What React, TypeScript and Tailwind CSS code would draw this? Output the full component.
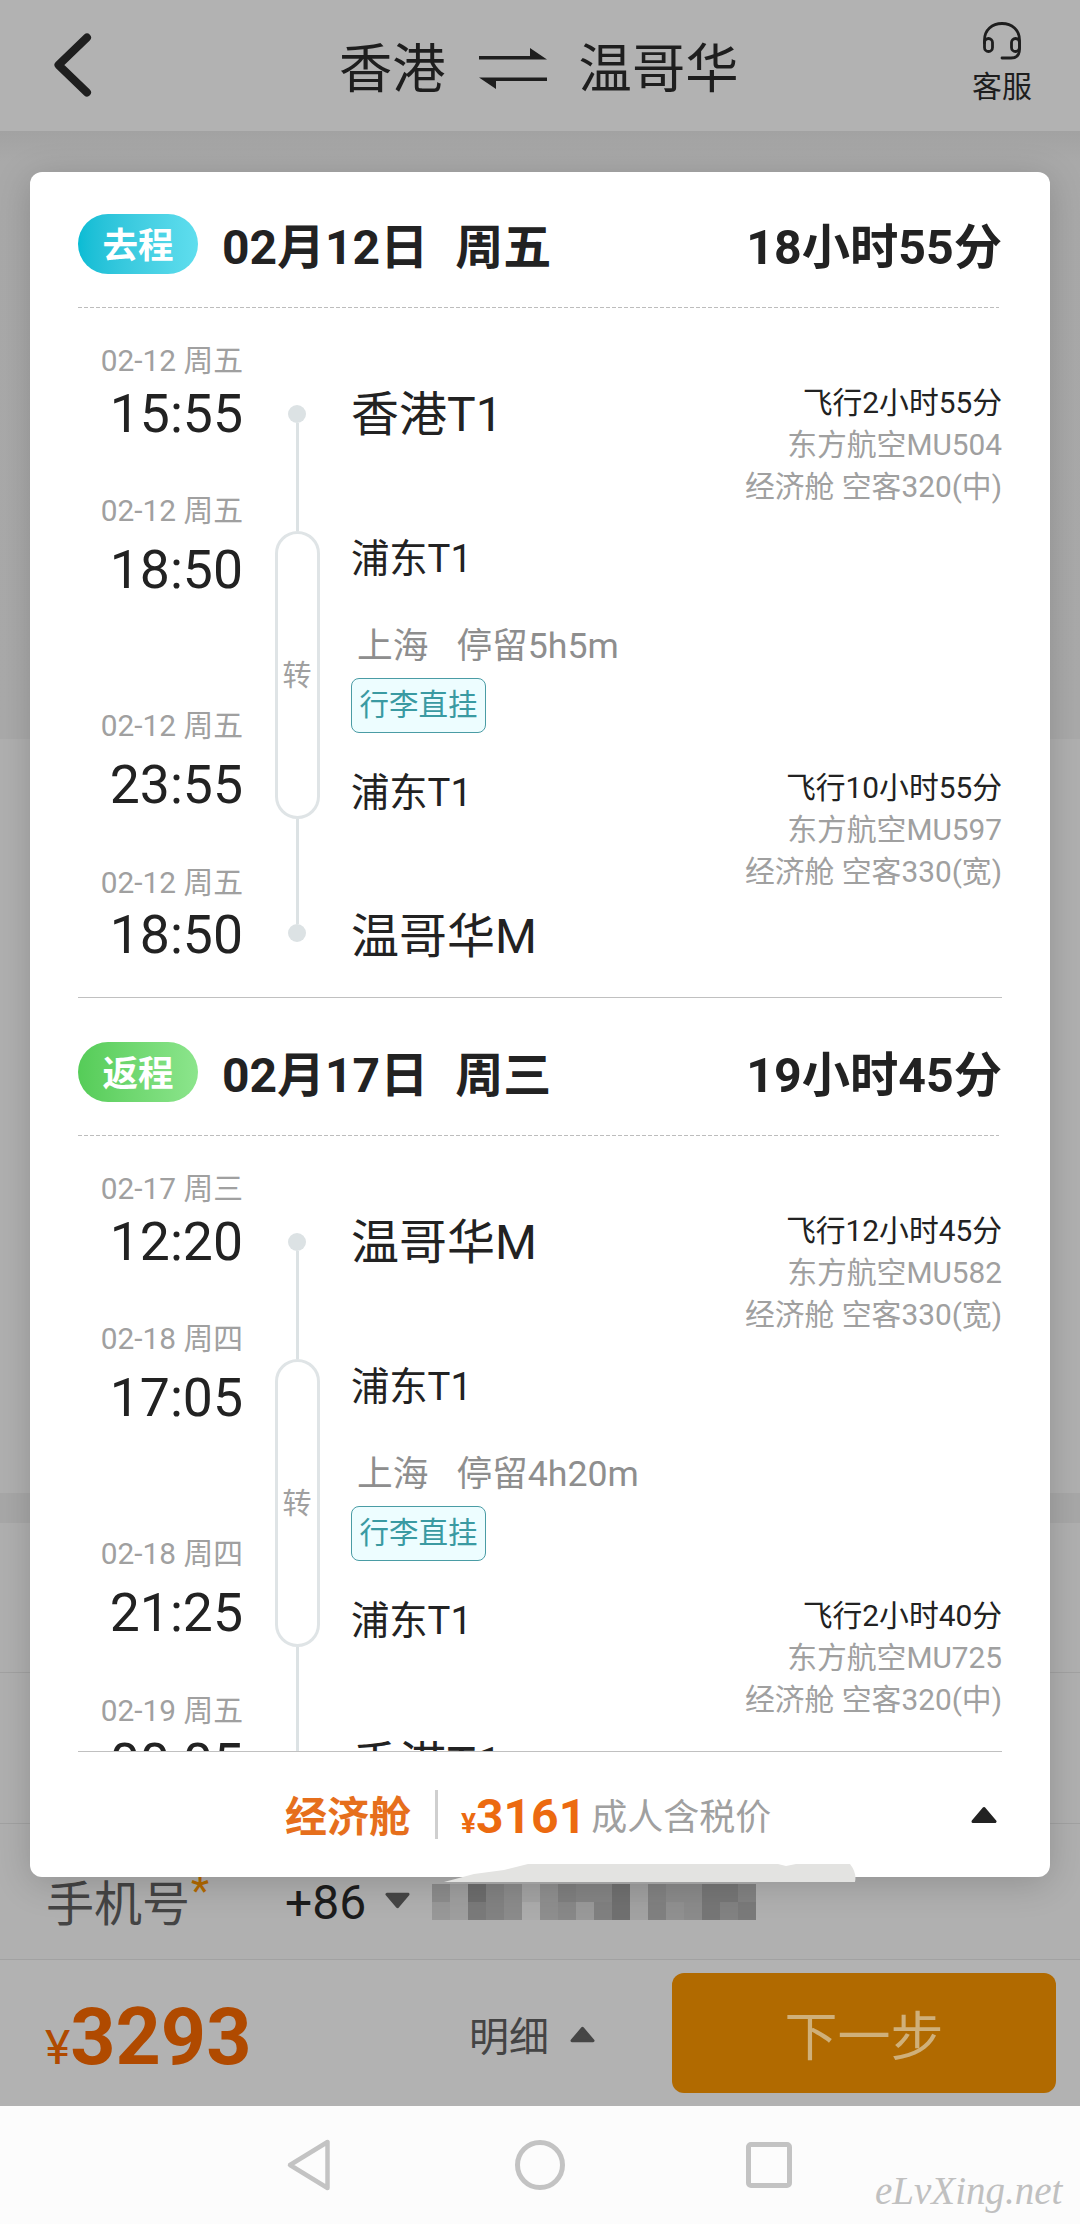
import type { ReactNode } from "react";

type Stop = { date: string; time: string };

type Flight = { duration: string; carrier: string; cabin: string };

type Journey = {
  label: string;
  badgeClass: string;
  date: string;
  weekday: string;
  total: string;
  from: string;
  to: string;
  via: string;
  city: string;
  layover: string;
  stops: Stop[];
  flights: Flight[];
};

const journeys: Journey[] = [
  {
    label: "去程",
    badgeClass: "from-[#08bcd4] to-[#5fdeee]",
    date: "02月12日",
    weekday: "周五",
    total: "18小时55分",
    from: "香港T1",
    to: "温哥华M",
    via: "浦东T1",
    city: "上海",
    layover: "停留5h5m",
    stops: [
      { date: "02-12 周五", time: "15:55" },
      { date: "02-12 周五", time: "18:50" },
      { date: "02-12 周五", time: "23:55" },
      { date: "02-12 周五", time: "18:50" },
    ],
    flights: [
      { duration: "飞行2小时55分", carrier: "东方航空MU504", cabin: "经济舱 空客320(中)" },
      { duration: "飞行10小时55分", carrier: "东方航空MU597", cabin: "经济舱 空客330(宽)" },
    ],
  },
  {
    label: "返程",
    badgeClass: "from-[#55cc58] to-[#8ce58c]",
    date: "02月17日",
    weekday: "周三",
    total: "19小时45分",
    from: "温哥华M",
    to: "香港T1",
    via: "浦东T1",
    city: "上海",
    layover: "停留4h20m",
    stops: [
      { date: "02-17 周三", time: "12:20" },
      { date: "02-18 周四", time: "17:05" },
      { date: "02-18 周四", time: "21:25" },
      { date: "02-19 周五", time: "00:05" },
    ],
    flights: [
      { duration: "飞行12小时45分", carrier: "东方航空MU582", cabin: "经济舱 空客330(宽)" },
      { duration: "飞行2小时40分", carrier: "东方航空MU725", cabin: "经济舱 空客320(中)" },
    ],
  },
];

// Censored phone number, two rows of 18px blocks
const mosaic = [
  "#8c8c8c", "#9f9f9f", "#6d6d6d", "#828282", "#8b8b8b", "#a3a3a3", "#8f8f8f", "#7f7f7f", "#848484", "#848484", "#707070", "#a0a0a0", "#828282", "#8a8a8a", "#8a8a8a", "#767676", "#767676", "#828282",
  "#989898", "#9e9e9e", "#7a7a7a", "#828282", "#8b8b8b", "#acacac", "#8e8e8e", "#888888", "#999999", "#808080", "#707070", "#a2a2a2", "#808080", "#909090", "#8b8b8b", "#767676", "#828282", "#7a7a7a",
];

const Triangle = ({ className }: { className: string }) => (
  <svg viewBox="0 0 26 17" className={className}>
    <path d="M13 2 L24 15 H2 Z" fill="currentColor" stroke="currentColor" strokeWidth="3" strokeLinejoin="round" />
  </svg>
);

const StopTime = ({ stop, className }: { stop: Stop; className: string }) => (
  <div className={`flex flex-col items-end ${className}`}>
    <span className="text-[29.8px] leading-[32px] text-[#a0a0a0]">{stop.date}</span>
    <span className="text-[53.5px] leading-[56px] text-[#222]">{stop.time}</span>
  </div>
);

const FlightInfo = ({ flight, className }: { flight: Flight; className: string }) => (
  <div className={`text-right text-[29.8px] leading-[42px] text-[#a0a0a0] ${className}`}>
    <p className="text-[#222]">{flight.duration}</p>
    <p>{flight.carrier}</p>
    <p>{flight.cabin}</p>
  </div>
);

const Timeline = () => (
  <div className="flex w-[46px] flex-col items-center pt-[97px]">
    <span className="size-[18px] shrink-0 rounded-full bg-[#dce2e4]" />
    <span className="h-[108px] w-[3px] shrink-0 bg-[#dce2e4]" />
    <div className="flex h-[288px] w-[45px] shrink-0 items-center justify-center rounded-full border-[3px] border-[#dfe4e6] pt-[3px] text-[29px] text-[#a0a0a0]">
      转
    </div>
    <span className="h-[105px] w-[3px] shrink-0 bg-[#dce2e4]" />
    <span className="size-[18px] shrink-0 rounded-full bg-[#dce2e4]" />
  </div>
);

const JourneySection = ({ journey }: { journey: Journey }) => (
  <section className="mb-[2px] h-[826px] shrink-0 border-b border-[#c0c0c0]">
    <div className="flex h-[135px] items-center pt-[17px]">
      <span className={`-mt-[9px] flex h-[60px] w-[120px] items-center justify-center rounded-full bg-linear-to-r pt-[7px] text-[35.5px] font-bold text-white ${journey.badgeClass}`}>
        {journey.label}
      </span>
      <h2 className="ml-[24px] text-[48px] font-bold text-[#222]">
        {journey.date}
        <span className="ml-[27px]">{journey.weekday}</span>
      </h2>
      <span className="ml-auto text-[48.3px] font-bold text-[#222]">{journey.total}</span>
    </div>

    <div className="h-px w-[921px] bg-[repeating-linear-gradient(90deg,#bdbdbd_0_4px,transparent_4px_6px)]" />

    <div className="flex">
      <div className="flex w-[165px] flex-col">
        <StopTime stop={journey.stops[0]} className="mt-[37px] gap-[9px]" />
        <StopTime stop={journey.stops[1]} className="mt-[53px] gap-[15px]" />
        <StopTime stop={journey.stops[2]} className="mt-[112px] gap-[15px]" />
        <StopTime stop={journey.stops[3]} className="mt-[54px] gap-[8px]" />
      </div>

      <div className="ml-[31px]">
        <Timeline />
      </div>

      <div className="ml-[31px] flex flex-col text-[#222]">
        <p className="mt-[79px] text-[48px] leading-[56px]">{journey.from}</p>
        <p className="mt-[92px] text-[38.3px] leading-[48px]">{journey.via}</p>
        <p className="mt-[41px] pl-[6px] text-[35.7px] leading-[44px] text-[#8e8e8e]">
          {journey.city}
          <span className="ml-[28px]">{journey.layover}</span>
        </p>
        <span className="mt-[10px] flex h-[55px] w-[135px] items-center justify-center rounded-lg border border-[#4a9ca5] bg-[#edfdff] text-[29.5px] whitespace-nowrap text-[#3a9aa2]">
          行李直挂
        </span>
        <p className="mt-[36px] text-[38.3px] leading-[48px]">{journey.via}</p>
        <p className="mt-[92px] text-[48px] leading-[56px]">{journey.to}</p>
      </div>

      <div className="ml-auto flex flex-col">
        <FlightInfo flight={journey.flights[0]} className="mt-[74px]" />
        <FlightInfo flight={journey.flights[1]} className="mt-[259px]" />
      </div>
    </div>
  </section>
);

const Header = () => (
  <header className="flex h-[131px] shrink-0 items-center bg-[#b2b2b2] text-[#1e1e1e]">
    <svg viewBox="0 0 44 70" className="-mt-[2px] ml-[50px] h-[70px] w-[44px]" fill="none" stroke="currentColor" strokeWidth="8" strokeLinecap="round" strokeLinejoin="round">
      <path d="M37 7.500 L8.500 35 L37 62.500" />
    </svg>
    <div className="ml-[245px] flex items-center pt-[10px] text-[53.3px]">
      <span>香港</span>
      <svg viewBox="0 0 68 41" className="-mt-[4px] ml-[33px] h-[41px] w-[68px]" fill="currentColor">
        <path d="M0 8 H51 V0 L68 11.500 H0 Z M68 29.500 H0 L17 41 V33 H68 Z" />
      </svg>
      <span className="ml-[32px]">温哥华</span>
    </div>
    <div className="mr-[48px] ml-auto flex flex-col items-center gap-[7px] text-[30px] leading-[40px]">
      <svg viewBox="0 0 38 38" className="-mt-[2px] h-[38px] w-[38px]" fill="none" stroke="currentColor" strokeWidth="2.800" strokeLinecap="round">
        <path d="M1.500 21 V18 C1.500 8 9 1.500 19 1.500 S36.500 8 36.500 18 V27 C36.500 33.500 33 36 28 36 H19" />
        <rect x="1.500" y="16.500" width="8" height="13" rx="4" />
        <rect x="28.500" y="16.500" width="8" height="13" rx="4" />
      </svg>
      <span>客服</span>
    </div>
  </header>
);

const PageRow = ({ children, className }: { children?: ReactNode; className: string }) => (
  <div className={`shrink-0 ${className}`}>{children}</div>
);

export default function App() {
  return (
    <div
      lang="zh-CN"
      className="relative flex h-[2224px] w-[1080px] flex-col overflow-hidden bg-[#b0b0b0] font-[Roboto,'Noto_Sans_CJK_SC',sans-serif]"
    >
      <Header />

      {/* Dimmed page behind the dialog */}
      <PageRow className="h-[608px] bg-linear-to-b from-[#a2a2a2] via-[#a9a9a9] via-5% to-[#aaaaaa]" />
      <PageRow className="h-[754px]" />
      <PageRow className="h-[30px] bg-[#a8a8a8]" />
      <PageRow className="h-[150px] border-b border-[#a2a2a2]" />
      <PageRow className="h-[151px] border-b border-[#a2a2a2]" />
      <PageRow className="flex h-[136px] items-center border-b border-[#a2a2a2] pt-[18px]">
        <span className="ml-[46px] pt-[8px] text-[48px] text-[#444]">手机号</span>
        <span className="-mt-[20px] ml-px text-[42px] leading-none text-[#b46a00]">*</span>
        <span className="ml-[76px] pt-[4px] text-[48px] text-[#1c1c1c]">+86</span>
        <Triangle className="ml-[19px] h-[17px] w-[25px] rotate-180 text-[#464646]" />
        <div className="mt-[2px] ml-[22px] grid grid-cols-[repeat(18,18px)] grid-rows-[18px_18px]">
          {mosaic.map((color, i) => (
            <span key={i} style={{ backgroundColor: color }} />
          ))}
        </div>
      </PageRow>

      <PageRow className="flex h-[146px] items-center bg-[#b2b2b2]">
        <div className="ml-[45px] flex w-[424px] items-baseline pt-[15px] text-[#b04a00]">
          <span className="text-[48px]">¥</span>
          <span className="text-[79px] leading-none font-bold">3293</span>
        </div>
        <span className="pt-[9px] text-[40px] text-[#444]">明细</span>
        <Triangle className="mt-[2px] ml-[21px] h-[17px] w-[25px] text-[#464646]" />
        <button className="mr-[24px] ml-auto h-[120px] w-[384px] rounded-xl bg-[#b16a00] pt-[12px] text-[53px] text-[#cfb07a]">
          下一步
        </button>
      </PageRow>

      <nav className="flex h-[118px] shrink-0 items-center bg-[#fcfcfc] text-[#c3c3c3]">
        <svg viewBox="0 0 46 54" className="ml-[286px] h-[54px] w-[46px] shrink-0" fill="none" stroke="currentColor" strokeWidth="4.500" strokeLinejoin="round">
          <path d="M41.500 4 V50 L4 27 Z" />
        </svg>
        <span className="ml-[183px] size-[50px] shrink-0 rounded-full border-[5px] border-current" />
        <span className="ml-[181px] size-[46px] shrink-0 rounded-[5px] border-[5px] border-current" />
        <span className="mt-[50px] ml-[83px] font-['Liberation_Serif',serif] text-[39px] leading-none text-[#c0c0c0] italic">
          eLvXing.net
        </span>
      </nav>

      {/* Itinerary dialog */}
      <div className="absolute top-[172px] left-[30px] flex h-[1705px] w-[1020px] flex-col rounded-xl bg-white px-[48px] shadow-[0_6px_36px_rgba(0,0,0,0.18)]">
        <div className="flex h-[1579px] shrink-0 flex-col overflow-hidden">
          {journeys.map((journey) => (
            <JourneySection key={journey.label} journey={journey} />
          ))}
        </div>
        <div className="flex flex-1 items-center border-t border-[#c0c0c0]">
          <span className="ml-[207px] pt-[5px] text-[42px] font-bold text-[#e66f1c]">经济舱</span>
          <span className="ml-[24px] h-[49px] w-[3px] bg-[#cfcfcf]" />
          <span className="ml-[23px] flex items-baseline pt-[4px] text-[#ec6a10]">
            <span className="text-[28px] font-bold">¥</span>
            <span className="text-[48px] font-bold">3161</span>
          </span>
          <span className="ml-[5px] pt-[6px] text-[36px] text-[#a0a0a0]">成人含税价</span>
          <Triangle className="mr-[5px] ml-auto h-[18px] w-[26px] text-[#222]" />
        </div>
      </div>

      {/* Brush stroke left over the dialog edge */}
      <svg viewBox="0 0 424 18" className="absolute top-[1864px] left-[432px] h-[18px] w-[424px]">
        <path d="M12 18 L42 10 L72 6 L96 0 H346 L354 2 L364 0 H418 Q425 9 423 18 Z" fill="#e3e3e1" />
      </svg>
    </div>
  );
}
